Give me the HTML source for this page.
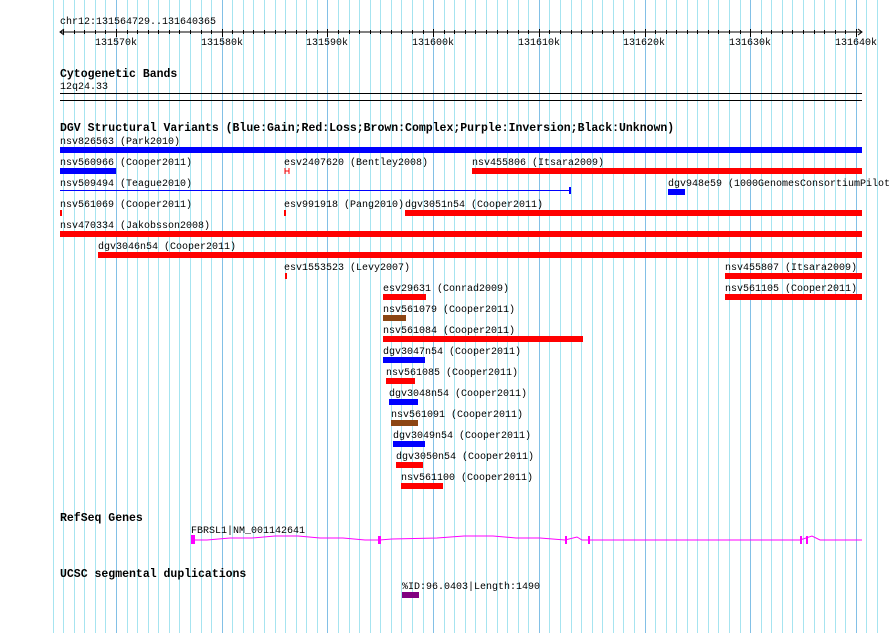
<!DOCTYPE html>
<html><head><meta charset="utf-8"><style>
html,body{margin:0;padding:0;background:#fff;width:890px;height:633px;overflow:hidden}
svg{display:block}
text{font-family:"Liberation Mono","DejaVu Sans Mono",monospace;font-size:10px;fill:#000}
.t{font-size:11.5px;font-weight:bold}
</style></head><body>
<svg id="s" width="890" height="633" xmlns="http://www.w3.org/2000/svg">
<g id="grid"></g>
<text x="60" y="24">chr12:131564729..131640365</text>
<line x1="60" y1="32" x2="862" y2="32" stroke="#000"/>
<polyline points="64,29 60,32 64,35" fill="none" stroke="#000"/>
<polyline points="858,29 862,32 858,35" fill="none" stroke="#000"/>
<g id="ticks" stroke="#000"></g>
<text x="116" y="45" text-anchor="middle">131570k</text>
<text x="222" y="45" text-anchor="middle">131580k</text>
<text x="327" y="45" text-anchor="middle">131590k</text>
<text x="433" y="45" text-anchor="middle">131600k</text>
<text x="539" y="45" text-anchor="middle">131610k</text>
<text x="644" y="45" text-anchor="middle">131620k</text>
<text x="750" y="45" text-anchor="middle">131630k</text>
<text x="856" y="45" text-anchor="middle">131640k</text>

<text class="t" x="60" y="77">Cytogenetic Bands</text>
<text x="60" y="89">12q24.33</text>
<rect x="60" y="93" width="802" height="1" fill="#000"/>
<rect x="60" y="100" width="802" height="1" fill="#000"/>

<text class="t" x="60" y="131">DGV Structural Variants (Blue:Gain;Red:Loss;Brown:Complex;Purple:Inversion;Black:Unknown)</text>

<text x="60" y="144">nsv826563 (Park2010)</text>
<rect x="60" y="147" width="802" height="6" fill="#0000ff"/>

<text x="60" y="165">nsv560966 (Cooper2011)</text>
<rect x="60" y="168" width="56" height="6" fill="#0000ff"/>
<text x="284" y="165">esv2407620 (Bentley2008)</text>
<path d="M285 168v6M289 168v6M285 171h4" stroke="#f00"/>
<text x="472" y="165">nsv455806 (Itsara2009)</text>
<rect x="472" y="168" width="390" height="6" fill="#f00"/>

<text x="60" y="186">nsv509494 (Teague2010)</text>
<rect x="60" y="190" width="510" height="1" fill="#0000ff"/>
<rect x="569" y="187" width="2" height="7" fill="#0000ff"/>
<text x="668" y="186">dgv948e59 (1000GenomesConsortiumPilot</text>
<rect x="668" y="189" width="17" height="6" fill="#0000ff"/>

<text x="60" y="207">nsv561069 (Cooper2011)</text>
<rect x="60" y="210" width="2" height="6" fill="#f00"/>
<text x="284" y="207">esv991918 (Pang2010)</text>
<rect x="284" y="210" width="2" height="6" fill="#f00"/>
<text x="405" y="207">dgv3051n54 (Cooper2011)</text>
<rect x="405" y="210" width="457" height="6" fill="#f00"/>

<text x="60" y="228">nsv470334 (Jakobsson2008)</text>
<rect x="60" y="231" width="802" height="6" fill="#f00"/>

<text x="98" y="249">dgv3046n54 (Cooper2011)</text>
<rect x="98" y="252" width="764" height="6" fill="#f00"/>

<text x="284" y="270">esv1553523 (Levy2007)</text>
<rect x="285" y="273" width="2" height="6" fill="#f00"/>
<text x="725" y="270">nsv455807 (Itsara2009)</text>
<rect x="725" y="273" width="137" height="6" fill="#f00"/>

<text x="383" y="291">esv29631 (Conrad2009)</text>
<rect x="383" y="294" width="43" height="6" fill="#f00"/>
<text x="725" y="291">nsv561105 (Cooper2011)</text>
<rect x="725" y="294" width="137" height="6" fill="#f00"/>

<text x="383" y="312">nsv561079 (Cooper2011)</text>
<rect x="383" y="315" width="23" height="6" fill="#8b4513"/>
<text x="383" y="333">nsv561084 (Cooper2011)</text>
<rect x="383" y="336" width="200" height="6" fill="#f00"/>
<text x="383" y="354">dgv3047n54 (Cooper2011)</text>
<rect x="383" y="357" width="42" height="6" fill="#0000ff"/>
<text x="386" y="375">nsv561085 (Cooper2011)</text>
<rect x="386" y="378" width="29" height="6" fill="#f00"/>
<text x="389" y="396">dgv3048n54 (Cooper2011)</text>
<rect x="389" y="399" width="29" height="6" fill="#0000ff"/>
<text x="391" y="417">nsv561091 (Cooper2011)</text>
<rect x="391" y="420" width="27" height="6" fill="#8b4513"/>
<text x="393" y="438">dgv3049n54 (Cooper2011)</text>
<rect x="393" y="441" width="32" height="6" fill="#0000ff"/>
<text x="396" y="459">dgv3050n54 (Cooper2011)</text>
<rect x="396" y="462" width="27" height="6" fill="#f00"/>
<text x="401" y="480">nsv561100 (Cooper2011)</text>
<rect x="401" y="483" width="42" height="6" fill="#f00"/>

<text class="t" x="60" y="521">RefSeq Genes</text>
<text x="191" y="533">FBRSL1|NM_001142641</text>
<polyline fill="none" stroke="#ff00ff" points="194,540 207,540 230,538 252,538 275,536 298,536 320,538 343,538 365,540 380,540 392,539 437,538 464,536 493,536 516,538 540,538 565,540 577,537 582,540 588,540"/>
<polyline fill="none" stroke="#ff00ff" points="588,540 640,540 690,540 740,540 800,540 812,536 820,540 862,540"/>
<rect x="191" y="535" width="4" height="9" fill="#ff00ff"/>
<rect x="378" y="536" width="3" height="8" fill="#ff00ff"/>
<rect x="565" y="536" width="2" height="8" fill="#ff00ff"/>
<rect x="588" y="536" width="2" height="8" fill="#ff00ff"/>
<rect x="800" y="536" width="2" height="8" fill="#ff00ff"/>
<rect x="806" y="536" width="2" height="8" fill="#ff00ff"/>

<text class="t" x="60" y="577">UCSC segmental duplications</text>
<text x="402" y="589">%ID:96.0403|Length:1490</text>
<rect x="402" y="592" width="17" height="6" fill="#800080"/>
</svg>
<script>
var g=document.getElementById('grid'),tk=document.getElementById('ticks'),ns='http://www.w3.org/2000/svg';
for(var k=-6;k<=72;k++){var x=Math.round(116+k*10.57)+0.5;if(x<0||x>890)continue;
var maj=(k%10===0);var l=document.createElementNS(ns,'line');
l.setAttribute('x1',x);l.setAttribute('x2',x);l.setAttribute('y1',0);l.setAttribute('y2',633);
l.setAttribute('stroke',maj?'#82c0e6':'#a6e4f0');g.appendChild(l);
if(x>=60&&x<=862){var t=document.createElementNS(ns,'line');t.setAttribute('x1',x);t.setAttribute('x2',x);
t.setAttribute('y1',maj?29:30);t.setAttribute('y2',maj?37:34);tk.appendChild(t);}}
</script>
</body></html>
